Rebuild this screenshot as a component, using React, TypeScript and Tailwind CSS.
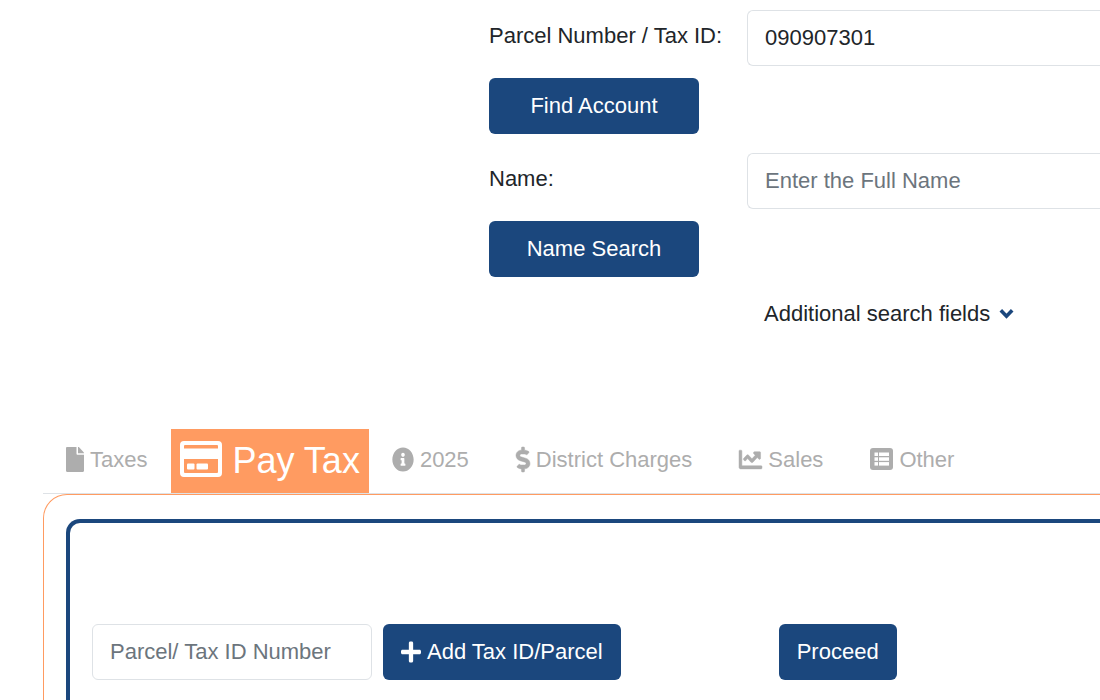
import type { ComponentType, ReactNode } from "react";
import { FaFile, FaInfoCircle, FaDollarSign, FaChartLine, FaPlus } from "react-icons/fa";

type IconProps = {
  className?: string;
  preserveAspectRatio?: string;
  stroke?: string;
  strokeWidth?: string;
};
type IconType = ComponentType<IconProps>;

const primary =
  "flex h-14 items-center justify-center rounded-md bg-[#1b477d] text-white whitespace-nowrap";
const field =
  "h-14 rounded-md border border-[#dee2e6] bg-white px-[17px] text-[#212529] placeholder:text-[#6c757d] outline-none";

function CardIcon({ className }: IconProps) {
  return (
    <svg viewBox="0 0 42 36" className={className} fill="currentColor" aria-hidden="true">
      <path
        fillRule="evenodd"
        d="M4 0H38a4 4 0 0 1 4 4V32a4 4 0 0 1-4 4H4a4 4 0 0 1-4-4V4a4 4 0 0 1 4-4ZM5 4a1 1 0 0 0-1 1V7.500H38V5a1 1 0 0 0-1-1ZM4 18V31a1 1 0 0 0 1 1H37a1 1 0 0 0 1-1V18Z"
      />
      <rect x="7" y="22.500" width="7.500" height="6" rx="1" />
      <rect x="16.500" y="22.500" width="11.500" height="6" rx="1" />
    </svg>
  );
}

function ListIcon({ className }: IconProps) {
  return (
    <svg viewBox="0 0 23 22" className={className} aria-hidden="true">
      <rect width="23" height="22" rx="3" fill="currentColor" />
      <g fill="#fff">
        <rect x="4.500" y="4.500" width="3.500" height="3.500" />
        <rect x="9" y="4.500" width="10" height="3.500" />
        <rect x="4.500" y="9.300" width="3.500" height="3.500" />
        <rect x="9" y="9.300" width="10" height="3.500" />
        <rect x="4.500" y="14.100" width="3.500" height="3.500" />
        <rect x="9" y="14.100" width="10" height="3.500" />
      </g>
    </svg>
  );
}

function ChevronIcon({ className }: IconProps) {
  return (
    <svg viewBox="0 0 15 11" className={className} aria-hidden="true">
      <path d="M1.800 2.300 7.500 8.200 13.200 2.300" fill="none" stroke="currentColor" strokeWidth="3.600" />
    </svg>
  );
}

function SearchRow({
  id,
  label,
  action,
  value,
  placeholder,
}: {
  id: string;
  label: string;
  action: string;
  value?: string;
  placeholder?: string;
}) {
  return (
    <div className="flex items-start">
      <div className="w-[258px] shrink-0">
        <label htmlFor={id} className="block h-[68px] pt-[10px]">
          {label}
        </label>
        <button type="button" className={primary + " w-[210px]"}>
          {action}
        </button>
      </div>
      <input
        id={id}
        type="text"
        defaultValue={value}
        placeholder={placeholder}
        className={field + " min-w-0 flex-1 rounded-r-none border-r-0"}
      />
    </div>
  );
}

function Tab({
  icon: Icon,
  size,
  bold,
  children,
}: {
  icon: IconType;
  size: string;
  bold?: boolean;
  children: ReactNode;
}) {
  return (
    <a
      href="#"
      className="flex h-16 items-center gap-[6px] pr-6 pb-[2px] pl-[23px] whitespace-nowrap text-[#adadad]"
    >
      <Icon
        className={size + " mb-[2px] overflow-visible"}
        preserveAspectRatio="none"
        stroke="currentColor"
        strokeWidth={bold ? "10" : "0"}
      />
      {children}
    </a>
  );
}

export default function App() {
  return (
    <div className="overflow-hidden bg-white font-['Liberation_Sans',Arial,sans-serif] text-[22px] leading-8 text-[#212529]">
      <form className="ml-[489px] flex flex-col gap-[19px] pt-[10px]">
        <SearchRow id="parcel" label="Parcel Number / Tax ID:" action="Find Account" value="090907301" />
        <SearchRow id="name" label="Name:" action="Name Search" placeholder="Enter the Full Name" />
      </form>

      <div className="ml-[764px] pt-[21px]">
        <button type="button" className="flex items-center gap-[9px] whitespace-nowrap">
          Additional search fields
          <ChevronIcon className="mb-[2px] h-[11px] w-[15px] text-[#1b477d]" />
        </button>
      </div>

      <nav className="mt-[99px] ml-[43px] flex border-b border-[#dee2e6]">
        <Tab icon={FaFile} size="h-[25px] w-[18px]">Taxes</Tab>
        <a
          href="#"
          aria-current="page"
          className="flex h-16 items-center gap-[10px] bg-[#ff9b61] px-[9px] text-[36px] whitespace-nowrap text-white"
        >
          <CardIcon className="mb-1 h-9 w-[42px]" />
          Pay Tax
        </a>
        <Tab icon={FaInfoCircle} size="h-[25px] w-[22px]">2025</Tab>
        <Tab icon={FaDollarSign} size="h-[25px] w-[14px]" bold>District Charges</Tab>
        <Tab icon={FaChartLine} size="h-[25px] w-[23px]" bold>Sales</Tab>
        <Tab icon={ListIcon} size="h-[22px] w-[23px]">Other</Tab>
      </nav>

      <main className="ml-[43px] rounded-tl-[24px] border-t border-l border-t-[#ff9b61] border-l-[#ff9b61] pt-6 pl-[22px]">
        <section className="flex rounded-tl-[14px] border-t-4 border-l-4 border-[#1b477d] pt-[101px] pb-5 pl-[22px]">
          <input
            type="text"
            aria-label="Parcel/ Tax ID Number"
            placeholder="Parcel/ Tax ID Number"
            className={field + " w-[280px]"}
          />
          <button type="button" className={primary + " ml-[11px] gap-[6px] px-[18px]"}>
            <FaPlus className="h-6 w-5" preserveAspectRatio="none" />
            Add Tax ID/Parcel
          </button>
          <button type="button" className={primary + " ml-[158px] px-[18px]"}>
            Proceed
          </button>
        </section>
      </main>
    </div>
  );
}
